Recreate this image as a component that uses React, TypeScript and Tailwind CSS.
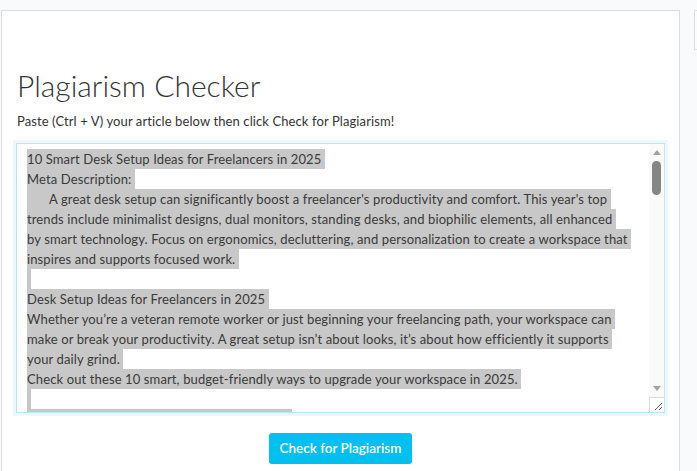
import React from "react";

const lines: { text: string; indent?: boolean; empty?: boolean; partial?: boolean }[] = [
  { text: "10 Smart Desk Setup Ideas for Freelancers in 2025 " },
  { text: "Meta Description: " },
  { text: "A great desk setup can significantly boost a freelancer's productivity and comfort. This year's top ", indent: true },
  { text: "trends include minimalist designs, dual monitors, standing desks, and biophilic elements, all enhanced " },
  { text: "by smart technology. Focus on ergonomics, decluttering, and personalization to create a workspace that " },
  { text: "inspires and supports focused work. " },
  { text: "", empty: true },
  { text: "Desk Setup Ideas for Freelancers in 2025 " },
  { text: "Whether you\u2019re a veteran remote worker or just beginning your freelancing path, your workspace can " },
  { text: "make or break your productivity. A great setup isn\u2019t about looks, it\u2019s about how efficiently it supports " },
  { text: "your daily grind. " },
  { text: "Check out these 10 smart, budget-friendly ways to upgrade your workspace in 2025. " },
  { text: "", empty: true },
  { text: "", partial: true },
];

export default function App() {
  return (
    <div
      className="min-h-[471px] w-[697px] overflow-hidden bg-[#f9fafc] pt-[10px]"
      style={{ fontFamily: "Lato, 'Noto Sans', sans-serif" }}
    >
      <div className="flex items-start">
        <div className="ml-[1px] h-[470px] w-[679px] shrink-0 border border-[#dddddd] bg-white px-[15px] pt-[56px]">
          <h1 className="text-[30px] font-light leading-[36px] text-[#333333]">Plagiarism Checker</h1>
          <p className="mt-[8px] text-[13px] leading-[20px] tracking-[0.1px] text-[#333333]">
            Paste (Ctrl + V) your article below then click Check for Plagiarism!
          </p>
          <div className="-mx-[4px] mt-[9px] rounded-[1px] bg-[#edf8fc] p-[3px]">
            <div className="flex h-[270px] border border-[#bfe5f3] bg-white">
              <div className="flex-1 overflow-hidden pl-[10px] pt-[5px] text-[13px] leading-[20px] tracking-[0.12px] text-[#3a3a3a]">
                {lines.map((l, i) => (
                  <div key={i} className="h-[20px] whitespace-pre">
                    {l.empty ? (
                      <span className="inline-block h-[20px] w-[4px] bg-[#c8c8c8] align-top" />
                    ) : l.partial ? (
                      <span className="inline-block h-[20px] w-[265px] bg-[#c8c8c8] align-top" />
                    ) : (
                      <span className={`bg-[#c8c8c8] py-[2px] ${l.indent ? "pl-[22px]" : ""}`}>{l.text}</span>
                    )}
                  </div>
                ))}
              </div>
              <div className="flex w-[15px] flex-col items-center bg-[#fafafa]">
                <div className="mt-[6px] h-0 w-0 border-x-[4px] border-b-[5px] border-x-transparent border-b-[#a3a3a3]" />
                <div className="mt-[6px] h-[34px] w-[9px] rounded-full bg-[#868686]" />
                <div className="flex-1" />
                <div className="mb-[6px] h-0 w-0 border-x-[4px] border-t-[5px] border-x-transparent border-t-[#a3a3a3]" />
                <div className="relative h-[15px] w-[15px] border-l border-t border-[#dcdcdc] bg-white">
                  <svg width="15" height="15" viewBox="0 0 15 15" className="absolute left-0 top-0">
                    <line x1="12" y1="5" x2="5" y2="12" stroke="#666" strokeWidth="1" />
                    <line x1="12" y1="9" x2="9" y2="12" stroke="#666" strokeWidth="1" />
                  </svg>
                </div>
              </div>
            </div>
          </div>
          <div className="mt-[17px] flex justify-center">
            <button className="h-[31px] w-[143px] rounded-[3px] bg-[#00c0ef] text-[13.5px] font-semibold text-white">
              Check for Plagiarism
            </button>
          </div>
        </div>
        <div className="ml-[14px] h-[40px] w-[10px] shrink-0 border border-[#dddddd] bg-[#fbfbfc]" />
      </div>
    </div>
  );
}
